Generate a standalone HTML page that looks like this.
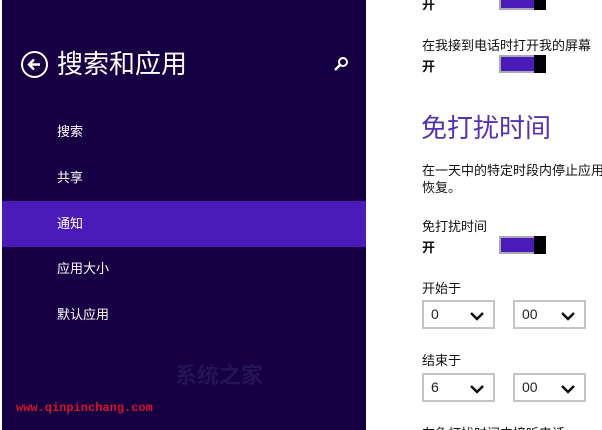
<!DOCTYPE html>
<html><head><meta charset="utf-8"><style>
*{margin:0;padding:0;box-sizing:border-box}
html,body{width:602px;height:430px;overflow:hidden}
body{background:#fff;position:relative;font-family:"Liberation Sans","Noto Sans CJK SC",sans-serif}
.l{position:absolute;left:2px;top:0;width:364px;height:430px;background:#160043}
.t{position:absolute;white-space:nowrap}
.w{color:#fff}
.m{font-size:13px;left:57px;color:#fff}
.hl{position:absolute;left:2px;top:201px;width:364px;height:46px;background:#4a1bb8}
.tg{position:absolute;left:499px;width:47px;height:18px;border:2px solid #a9a9b5;background:#4a1bb8}
.tg:after{content:"";position:absolute;right:-2px;top:-2px;width:12px;height:18px;background:#000}
.s{position:absolute;width:73px;height:29px;border:2px solid #c4c4c4;font-size:14px;color:#222;padding:4px 0 0 7px}
.s svg{position:absolute;right:9px;top:9px}
.k{font-size:13px;color:#111}
.clip{position:absolute;left:0;top:0;width:602px;height:430px;overflow:hidden}
</style></head><body><div class="clip">
<div class="l"></div>
<div class="hl"></div>
<svg class="t" style="left:20px;top:50px" width="29" height="29" viewBox="0 0 29 29"><circle cx="14.5" cy="14.5" r="12.5" fill="none" stroke="#fff" stroke-width="2"/><path d="M20 14.5H9M14 9.5l-5 5 5 5" fill="none" stroke="#fff" stroke-width="2.4"/></svg>
<div class="t w" style="left:57px;top:44px;font-size:26px">搜索和应用</div>
<svg class="t" style="left:333px;top:56px" width="16" height="16" viewBox="0 0 16 16"><circle cx="10" cy="6" r="4" fill="none" stroke="#fff" stroke-width="2"/><path d="M7 9l-5 5" stroke="#fff" stroke-width="2.4"/></svg>
<div class="t m" style="top:121px">搜索</div>
<div class="t m" style="top:167px">共享</div>
<div class="t m" style="top:213px">通知</div>
<div class="t m" style="top:258px">应用大小</div>
<div class="t m" style="top:304px">默认应用</div>
<div class="t" style="left:175px;top:358px;font-size:22px;color:#241456;font-weight:bold">系统之家</div>
<div class="t" style="left:16px;top:401px;font-family:'Liberation Mono',monospace;font-size:12px;color:#d4162a;font-weight:bold">www.qinpinchang.com</div>
<div class="tg" style="top:-8px"></div>
<div class="t k" style="left:422px;top:-6px;font-weight:bold">开</div>
<div class="t k" style="left:422px;top:35px">在我接到电话时打开我的屏幕</div>
<div class="tg" style="top:55px"></div>
<div class="t k" style="left:422px;top:56px;font-weight:bold">开</div>
<div class="t" style="left:421px;top:108px;font-size:26px;color:#5630b8">免打扰时间</div>
<div class="t k" style="left:422px;top:160px">在一天中的特定时段内停止应用通知</div>
<div class="t k" style="left:422px;top:177px">恢复。</div>
<div class="t k" style="left:422px;top:216px">免打扰时间</div>
<div class="tg" style="top:236px"></div>
<div class="t k" style="left:422px;top:237px;font-weight:bold">开</div>
<div class="t k" style="left:422px;top:278px">开始于</div>
<div class="s" style="left:422px;top:300px">0<svg width="14" height="10"><path d="M1 2l6 6 6-6" fill="none" stroke="#111" stroke-width="2.5"/></svg></div>
<div class="s" style="left:513px;top:300px">00<svg width="14" height="10"><path d="M1 2l6 6 6-6" fill="none" stroke="#111" stroke-width="2.5"/></svg></div>
<div class="t k" style="left:422px;top:350px">结束于</div>
<div class="s" style="left:422px;top:373px">6<svg width="14" height="10"><path d="M1 2l6 6 6-6" fill="none" stroke="#111" stroke-width="2.5"/></svg></div>
<div class="s" style="left:513px;top:373px">00<svg width="14" height="10"><path d="M1 2l6 6 6-6" fill="none" stroke="#111" stroke-width="2.5"/></svg></div>
<div class="t k" style="left:422px;top:423px">在免打扰时间内接听电话</div>
</div></body></html>
